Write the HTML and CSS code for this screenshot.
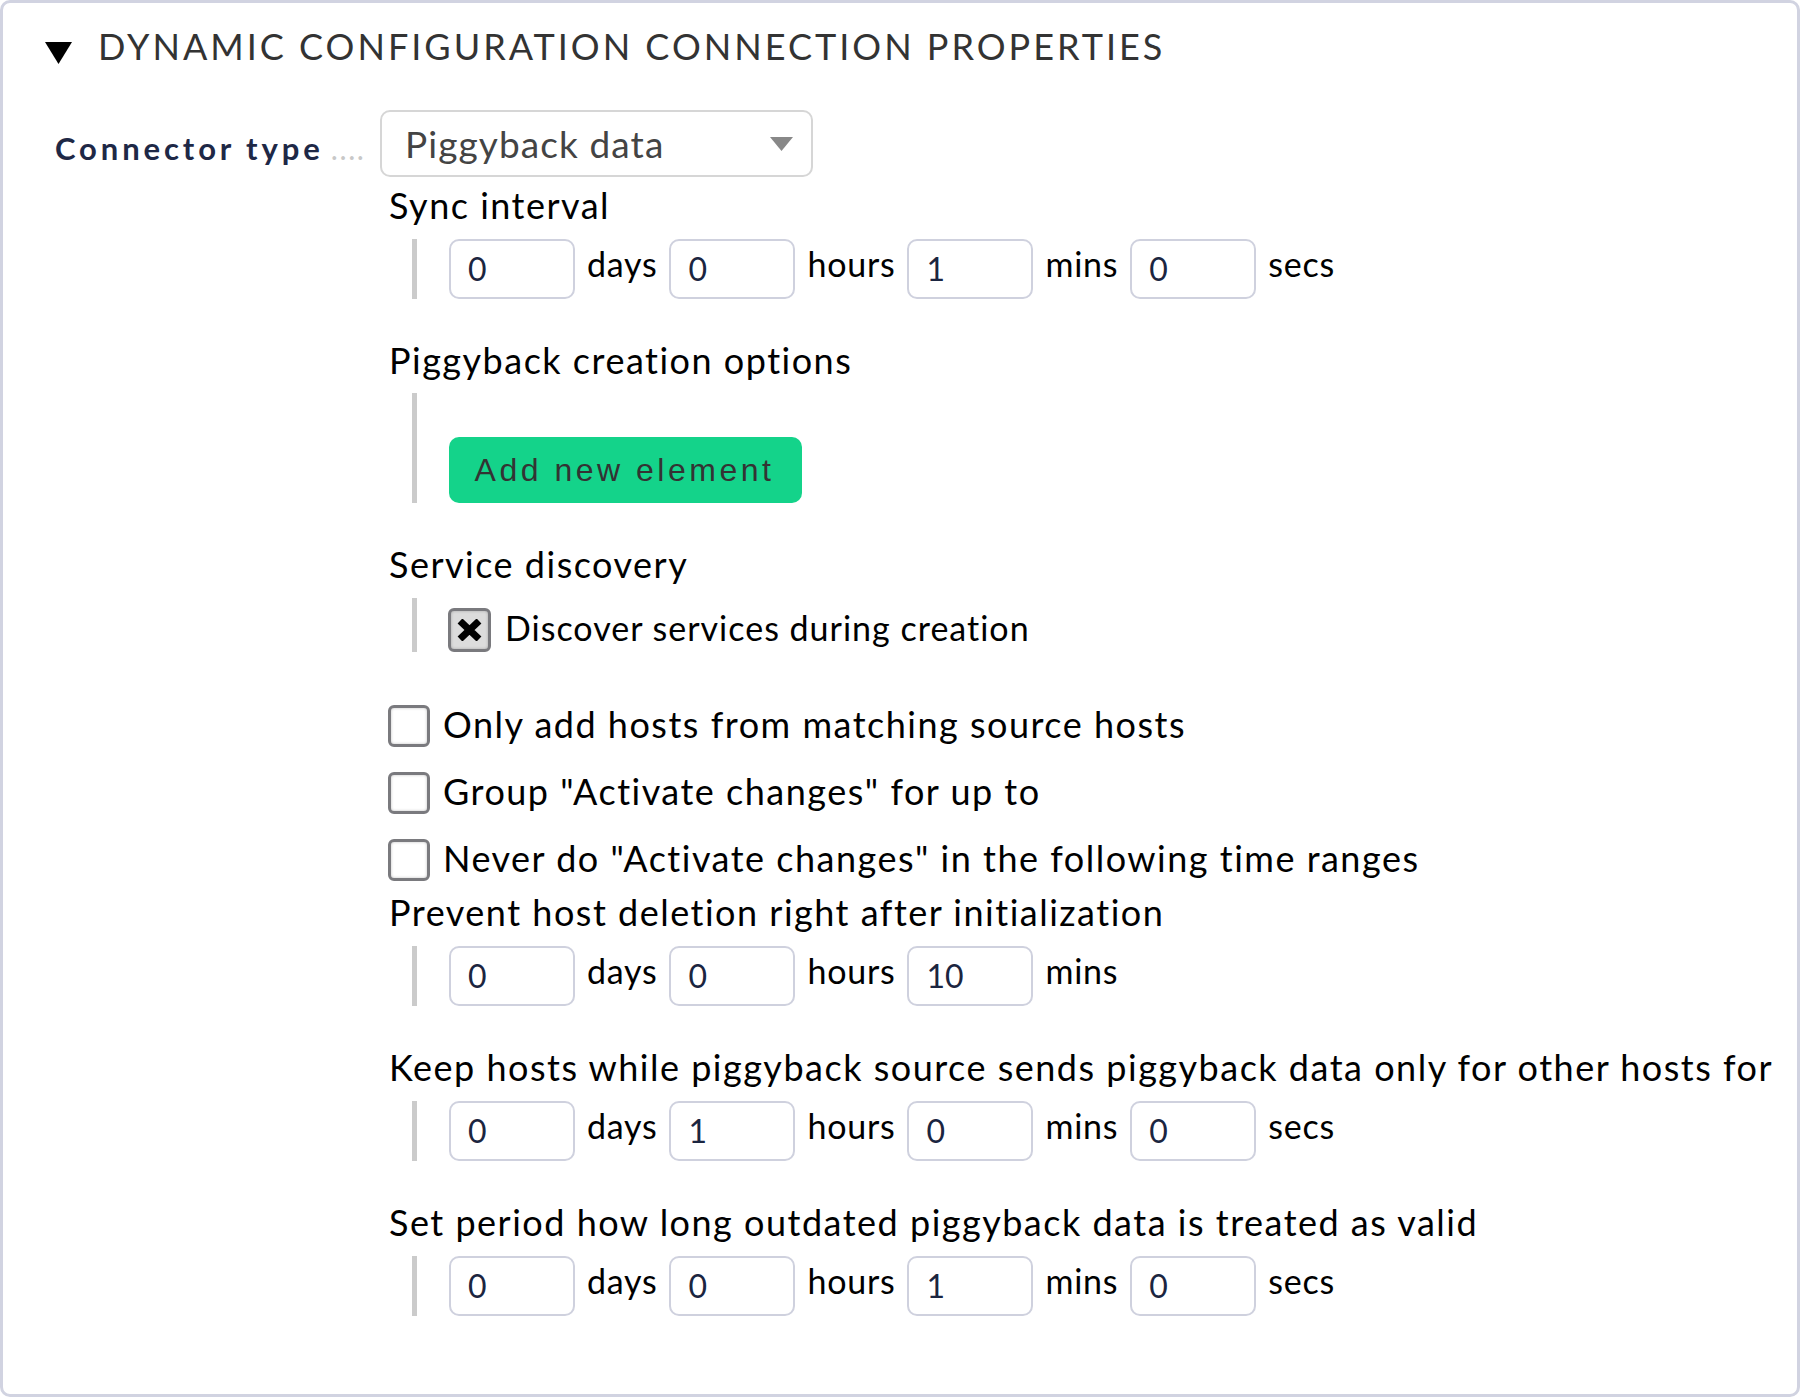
FILE: index.html
```html
<!DOCTYPE html>
<html>
<head>
<meta charset="utf-8">
<link rel="stylesheet" href="styles.css">
</head>
<body>
<div class="box">
  <div class="head">
    <svg class="tri" width="27" height="22" viewBox="0 0 27 22"><polygon points="0,0 27,0 13.5,22" fill="#000"/></svg>
    <span class="title">DYNAMIC CONFIGURATION CONNECTION PROPERTIES</span>
  </div>
  <div class="form">
    <div class="legend"><span class="legend-text">Connector type</span><span class="dots">....</span></div>
    <div class="content">
      <div class="select"><span class="select-text">Piggyback data</span><svg class="arrow" width="23" height="14" viewBox="0 0 23 14"><polygon points="0,0 23,0 11.5,14" fill="#888"/></svg></div>

      <div class="label first">Sync interval</div>
      <div class="indent">
        <div class="age">
          <span class="inp">0</span><span class="unit">days</span>
          <span class="inp">0</span><span class="unit">hours</span>
          <span class="inp">1</span><span class="unit">mins</span>
          <span class="inp">0</span><span class="unit">secs</span>
        </div>
      </div>

      <div class="label gap">Piggyback creation options</div>
      <div class="indent pad-btn">
        <div class="btn">Add new element</div>
      </div>

      <div class="label gap">Service discovery</div>
      <div class="indent pad-cb">
        <div class="cb-row">
          <span class="cb checked"><svg width="25" height="22" viewBox="0 0 25 22"><path d="M3 2 L22 20 M22 2 L3 20" stroke="#000" stroke-width="7"/></svg></span>
          <span class="cb-text small">Discover services during creation</span>
        </div>
      </div>

      <div class="cb-list">
        <div class="cb-item"><span class="cb"></span><span class="cb-text">Only add hosts from matching source hosts</span></div>
        <div class="cb-item"><span class="cb"></span><span class="cb-text">Group "Activate changes" for up to</span></div>
        <div class="cb-item"><span class="cb"></span><span class="cb-text">Never do "Activate changes" in the following time ranges</span></div>
      </div>

      <div class="label after-list">Prevent host deletion right after initialization</div>
      <div class="indent">
        <div class="age">
          <span class="inp">0</span><span class="unit">days</span>
          <span class="inp">0</span><span class="unit">hours</span>
          <span class="inp">10</span><span class="unit">mins</span>
        </div>
      </div>

      <div class="label gap">Keep hosts while piggyback source sends piggyback data only for other hosts for</div>
      <div class="indent">
        <div class="age">
          <span class="inp">0</span><span class="unit">days</span>
          <span class="inp">1</span><span class="unit">hours</span>
          <span class="inp">0</span><span class="unit">mins</span>
          <span class="inp">0</span><span class="unit">secs</span>
        </div>
      </div>

      <div class="label gap">Set period how long outdated piggyback data is treated as valid</div>
      <div class="indent">
        <div class="age">
          <span class="inp">0</span><span class="unit">days</span>
          <span class="inp">0</span><span class="unit">hours</span>
          <span class="inp">1</span><span class="unit">mins</span>
          <span class="inp">0</span><span class="unit">secs</span>
        </div>
      </div>
    </div>
  </div>
</div>
</body>
</html>
```

FILE: styles.css
```css
html, body {
  margin: 0;
  padding: 0;
  background: #fff;
}
body {
  font-family: Lato, "Noto Sans", sans-serif;
  color: #000;
}
.box {
  width: 1800px;
  height: 1397px;
  box-sizing: border-box;
  border: 3px solid #d1d3e1;
  border-radius: 10px;
  background: #fff;
}
.head {
  display: flex;
  align-items: flex-start;
  padding: 23px 0 0 42px;
}
.tri {
  margin-top: 16px;
  flex: none;
}
.title {
  margin-left: 26px;
  font-size: 36px;
  line-height: 40px;
  letter-spacing: 3px;
  color: #333;
}
.form {
  display: flex;
  margin-top: 44px;
}
.legend {
  width: 333px;
  padding: 18px 0 0 52px;
  flex: none;
  font-size: 31px;
  line-height: 40px;
  white-space: nowrap;
}
.legend-text {
  font-weight: bold;
  letter-spacing: 3.9px;
  color: #1e2846;
}
.dots {
  color: #c8c8c8;
  font-size: 30px;
  margin-left: 7px;
  letter-spacing: 1.6px;
}
.content {
  flex: 1;
}
.select {
  margin-left: -8px;
  width: 433px;
  height: 67px;
  box-sizing: border-box;
  border: 2px solid #d6d6d6;
  border-radius: 10px;
  display: flex;
  align-items: center;
  padding-left: 23px;
}
.select-text {
  font-size: 37px;
  line-height: 63px;
  color: #444;
  letter-spacing: 1.1px;
}
.arrow {
  margin-left: auto;
  margin-right: 18px;
}
.label {
  font-size: 36px;
  line-height: 42px;
  padding-left: 1px;
  letter-spacing: 1.5px;
  white-space: nowrap;
}
.label.first {
  margin-top: 7px;
}
.label.gap {
  margin-top: 40px;
}
.label.after-list {
  margin-top: -2px;
}
.indent {
  margin-top: 13px;
  margin-left: 24px;
  border-left: 5px solid #cbcbcb;
  padding-left: 32px;
}
.pad-btn {
  margin-top: 12px;
  padding-top: 44px;
}
.pad-cb {
  padding-top: 10px;
}
.age {
  display: flex;
  align-items: center;
  height: 60px;
}
.inp {
  width: 126px;
  height: 60px;
  box-sizing: border-box;
  border: 2px solid #cfd1de;
  border-radius: 10px;
  font-size: 32px;
  line-height: 56px;
  padding-left: 17px;
  color: #1b2540;
  flex: none;
}
.unit {
  font-size: 34px;
  line-height: 40px;
  margin: 0 12px 10px;
  letter-spacing: 0.75px;
}
.btn {
  width: 353px;
  height: 66px;
  box-sizing: border-box;
  background: #14d38a;
  border-radius: 10px;
  font-family: "Liberation Sans", Arial, sans-serif;
  font-size: 32px;
  line-height: 66px;
  letter-spacing: 3.5px;
  padding-right: 2px;
  text-align: center;
  color: #333;
}
.cb-row {
  display: flex;
  align-items: center;
  height: 44px;
  margin-left: -1px;
}
.cb {
  width: 42px;
  height: 42px;
  box-sizing: border-box;
  border: 3px solid #7a7a7e;
  border-radius: 6px;
  background: #fff;
  box-shadow: inset 0 0 3px rgba(0,0,0,0.25);
  display: flex;
  align-items: center;
  justify-content: center;
  flex: none;
}
.cb.checked {
  width: 43px;
  height: 44px;
  background: #dcdcdc;
}
.cb-text {
  margin-left: 13px;
  margin-bottom: 3px;
  font-size: 36px;
  line-height: 50px;
  letter-spacing: 1.5px;
  white-space: nowrap;
}
.cb-text.small {
  font-size: 34px;
  line-height: 40px;
  letter-spacing: 1px;
  margin-left: 14px;
  margin-bottom: 4px;
}
.cb-list {
  margin-top: 40px;
}
.cb-item {
  display: flex;
  align-items: center;
  height: 67px;
}
```
